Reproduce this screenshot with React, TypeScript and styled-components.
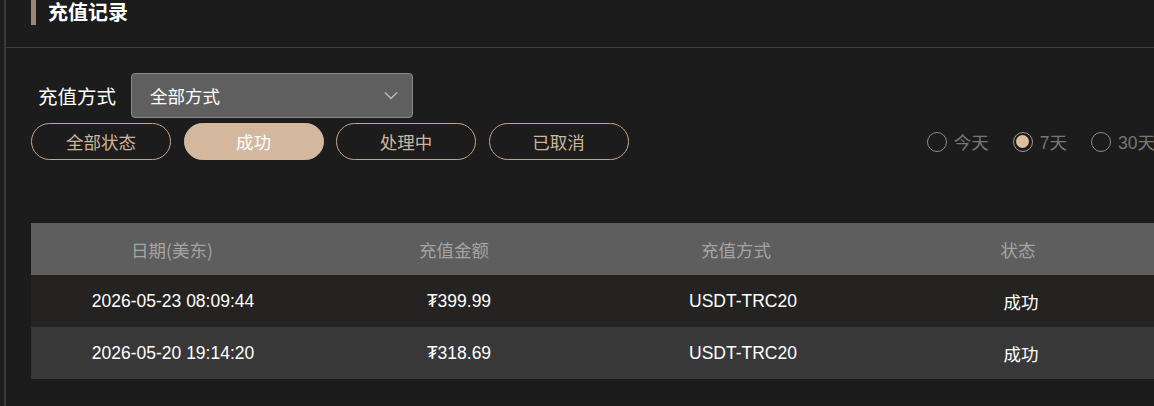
import React from "react";
import styled, { createGlobalStyle } from "styled-components";

const Global = createGlobalStyle`
  html, body { margin: 0; padding: 0; background: #1c1c1c; overflow: hidden; }
  body { font-family: "Liberation Sans", "Noto Sans CJK SC", sans-serif; }
  * { box-sizing: border-box; }
`;

const Frame = styled.div`
  margin-left: 4px;
  width: 1200px;
  min-height: 406px;
  border-left: 2px solid #3a3a3a;
  background: #1c1c1c;
`;

const Header = styled.div`
  height: 48px;
  padding-left: 25px;
  display: flex;
  align-items: flex-start;
  gap: 12px;
  border-bottom: 1px solid #3d3d3d;
`;

const Accent = styled.div`
  width: 5px;
  height: 25px;
  background: #9a8677;
`;

const Title = styled.h1`
  margin: 0;
  font-size: 20px;
  line-height: 26px;
  font-weight: 700;
  color: #ffffff;
`;

const Content = styled.div`
  padding: 25px 0 0 25px;
  width: 1153px;
`;

const MethodRow = styled.div`
  display: flex;
  align-items: center;
  gap: 15px;
  padding-left: 7px;
`;

const Label = styled.span`
  font-size: 19.5px;
  color: #ffffff;
  font-family: "Noto Sans CJK SC", sans-serif;
`;

const Select = styled.div`
  width: 282px;
  height: 45px;
  border: 1px solid #8a8a8a;
  border-radius: 4px;
  background: #5f5f5f;
  display: flex;
  align-items: center;
  justify-content: space-between;
  padding: 0 14px 0 18px;
  color: #ffffff;
  font-size: 17.5px;
  font-family: "Noto Sans CJK SC", sans-serif;
`;

const FilterRow = styled.div`
  margin-top: 5px;
  display: flex;
  align-items: center;
  justify-content: space-between;
`;

const Pills = styled.div`
  display: flex;
  gap: 12.5px;
`;

const Pill = styled.button<{ $active?: boolean }>`
  width: 140px;
  height: 37px;
  border-radius: 19px;
  border: 1px solid ${(p) => (p.$active ? "#d4b89e" : "#c2a68b")};
  background: ${(p) => (p.$active ? "#d4b89e" : "transparent")};
  color: ${(p) => (p.$active ? "#ffffff" : "#cdb49c")};
  font-size: 17.5px;
  font-family: "Noto Sans CJK SC", sans-serif;
  padding: 0;
  display: flex;
  align-items: center;
  justify-content: center;
  cursor: pointer;
`;

const Radios = styled.div`
  display: flex;
  gap: 24px;
  margin-right: 4px;
`;

const RadioItem = styled.label`
  display: flex;
  align-items: center;
  gap: 7px;
  color: #777777;
  font-size: 17.5px;
  font-family: "Liberation Sans", "Noto Sans CJK SC", sans-serif;
`;

const Circle = styled.span<{ $checked?: boolean }>`
  width: 20px;
  height: 20px;
  border-radius: 50%;
  border: 1px solid ${(p) => (p.$checked ? "#9a9a9a" : "#8a8a8a")};
  display: flex;
  align-items: center;
  justify-content: center;
  &::after {
    content: "";
    display: ${(p) => (p.$checked ? "block" : "none")};
    width: 13px;
    height: 13px;
    border-radius: 50%;
    background: #dcbf9f;
  }
`;

const Table = styled.div`
  margin-top: 63px;
  width: 1128px;
`;

const Row = styled.div<{ $bg: string; $head?: boolean }>`
  display: grid;
  grid-template-columns: ${(p) => (p.$head ? "repeat(4, 1fr)" : "284px 288px 280px 1fr")};
  height: 52px;
  align-items: center;
  background: ${(p) => p.$bg};
`;

const Cell = styled.div<{ $head?: boolean; $cjk?: boolean }>`
  text-align: center;
  font-size: 17.5px;
  color: ${(p) => (p.$head ? "#a4a4a4" : "#ffffff")};
  font-family: ${(p) =>
    p.$head || p.$cjk ? '"Noto Sans CJK SC", sans-serif' : '"Liberation Sans", "Noto Sans CJK SC", sans-serif'};
`;

const Chevron = () => (
  <svg width="14" height="9" viewBox="0 0 14 9">
    <path d="M1 1.5 L7 7.5 L13 1.5" fill="none" stroke="#bdbdbd" strokeWidth="1.4" />
  </svg>
);

const rows = [
  { date: "2026-05-23 08:09:44", amt: "₮399.99", method: "USDT-TRC20", status: "成功" },
  { date: "2026-05-20 19:14:20", amt: "₮318.69", method: "USDT-TRC20", status: "成功" },
];

export default function App() {
  return (
    <>
      <Global />
      <Frame>
        <Header>
          <Accent />
          <Title>充值记录</Title>
        </Header>
        <Content>
          <MethodRow>
            <Label>充值方式</Label>
            <Select>
              <span>全部方式</span>
              <Chevron />
            </Select>
          </MethodRow>
          <FilterRow>
            <Pills>
              <Pill>全部状态</Pill>
              <Pill $active>成功</Pill>
              <Pill>处理中</Pill>
              <Pill>已取消</Pill>
            </Pills>
            <Radios>
              <RadioItem><Circle />今天</RadioItem>
              <RadioItem><Circle $checked />7天</RadioItem>
              <RadioItem><Circle />30天</RadioItem>
            </Radios>
          </FilterRow>
          <Table>
            <Row $bg="#5e5e5e" $head>
              <Cell $head>日期(美东)</Cell>
              <Cell $head>充值金额</Cell>
              <Cell $head>充值方式</Cell>
              <Cell $head>状态</Cell>
            </Row>
            {rows.map((r, i) => (
              <Row key={i} $bg={i % 2 === 0 ? "#242322" : "#383838"}>
                <Cell>{r.date}</Cell>
                <Cell>{r.amt}</Cell>
                <Cell>{r.method}</Cell>
                <Cell $cjk>{r.status}</Cell>
              </Row>
            ))}
          </Table>
        </Content>
      </Frame>
    </>
  );
}
